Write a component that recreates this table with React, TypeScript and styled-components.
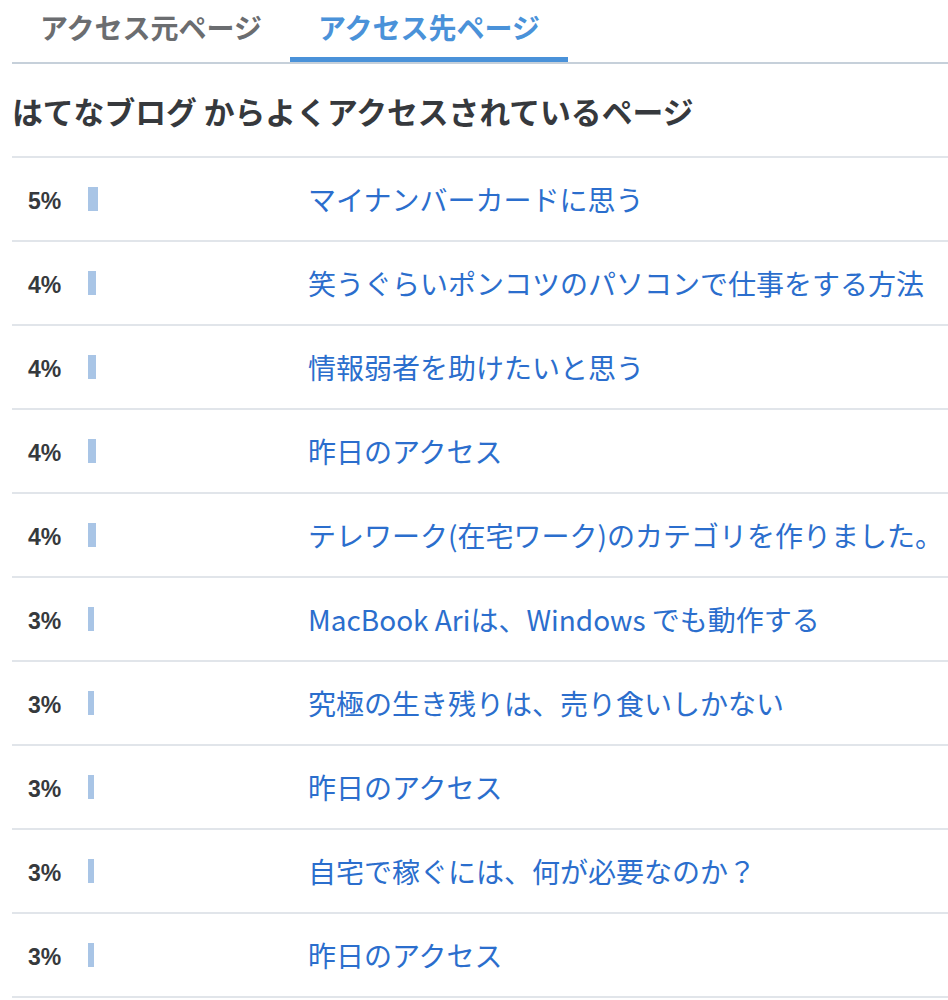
import * as React from 'react';
import styled, { createGlobalStyle } from 'styled-components';

const GlobalStyle = createGlobalStyle`
  body {
    margin: 0;
    background: #ffffff;
    font-family: 'Noto Sans CJK JP', 'Liberation Sans', sans-serif;
  }
`;

const colors = {
  text: '#36393d',
  muted: '#6b6d70',
  active: '#4a92d9',
  link: '#2b6ecd',
  bar: '#a9c5e6',
  tabBorder: '#c6d0da',
  rowBorder: '#e1e5ea',
};

const Page = styled.div`
  padding-left: 12px;
  overflow: hidden;
`;

const TabBar = styled.div`
  display: flex;
  border-bottom: 2px solid ${colors.tabBorder};
`;

const Tab = styled.div<{ $active?: boolean }>`
  width: 278px;
  height: 62px;
  box-sizing: border-box;
  padding-top: 7px;
  text-align: center;
  font-size: 28px;
  font-weight: 700;
  line-height: 40px;
  color: ${({ $active }) => ($active ? colors.active : colors.muted)};
  border-bottom: 5px solid
    ${({ $active }) => ($active ? colors.active : 'transparent')};
  cursor: pointer;
`;

const Heading = styled.h2`
  margin: 0;
  padding: 26px 0 24px;
  font-size: 30.8px;
  line-height: 42px;
  font-weight: 700;
  color: ${colors.text};
  white-space: nowrap;
  border-bottom: 2px solid ${colors.rowBorder};
`;

const List = styled.ul`
  list-style: none;
  margin: 0;
  padding: 0;
`;

const Row = styled.li`
  display: flex;
  align-items: center;
  height: 82px;
  border-bottom: 2px solid ${colors.rowBorder};
`;

const Percent = styled.span`
  width: 60px;
  padding-left: 16px;
  padding-top: 4px;
  font-family: 'Liberation Sans', Arial, sans-serif;
  font-size: 23px;
  font-weight: 700;
  color: ${colors.text};
`;

const BarCell = styled.div`
  width: 220px;
  display: flex;
  align-items: center;
`;

const Bar = styled.div`
  height: 24px;
  background: ${colors.bar};
`;

const PageLink = styled.a`
  font-size: 28px;
  line-height: 40px;
  color: ${colors.link};
  text-decoration: none;
  white-space: nowrap;
`;

const pages = [
  { percent: 5, title: 'マイナンバーカードに思う' },
  { percent: 4, title: '笑うぐらいポンコツのパソコンで仕事をする方法' },
  { percent: 4, title: '情報弱者を助けたいと思う' },
  { percent: 4, title: '昨日のアクセス' },
  { percent: 4, title: 'テレワーク(在宅ワーク)のカテゴリを作りました。' },
  { percent: 3, title: 'MacBook Ariは、Windows でも動作する' },
  { percent: 3, title: '究極の生き残りは、売り食いしかない' },
  { percent: 3, title: '昨日のアクセス' },
  { percent: 3, title: '自宅で稼ぐには、何が必要なのか？' },
  { percent: 3, title: '昨日のアクセス' },
];

export default function App() {
  const [tab, setTab] = React.useState(1);

  return (
    <>
      <GlobalStyle />
      <Page>
        <TabBar>
          <Tab $active={tab === 0} onClick={() => setTab(0)}>
            アクセス元ページ
          </Tab>
          <Tab $active={tab === 1} onClick={() => setTab(1)}>
            アクセス先ページ
          </Tab>
        </TabBar>
        <Heading>はてなブログ からよくアクセスされているページ</Heading>
        <List>
          {pages.map((page, index) => (
            <Row key={`page-${index}`}>
              <Percent>{page.percent}%</Percent>
              <BarCell>
                <Bar style={{ width: page.percent * 2 }} />
              </BarCell>
              <PageLink href="#">{page.title}</PageLink>
            </Row>
          ))}
        </List>
      </Page>
    </>
  );
}
